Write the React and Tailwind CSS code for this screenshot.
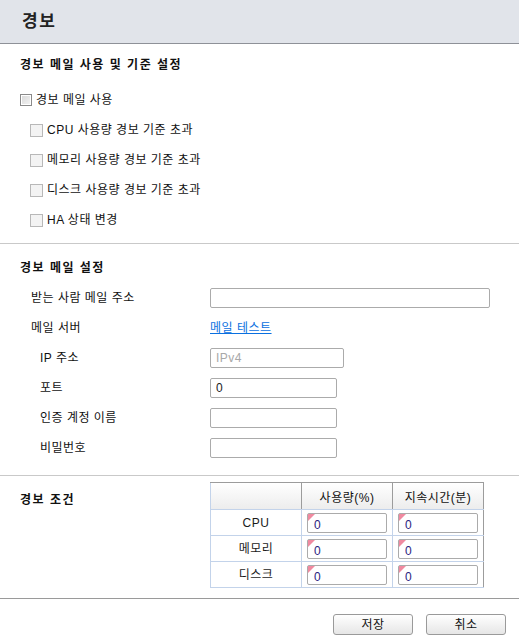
import { useState } from 'react';

const font = { fontFamily: '"Liberation Sans", "Noto Sans CJK KR", sans-serif' };

const alarmItems = ['CPU 사용량 경보 기준 초과', '메모리 사용량 경보 기준 초과', '디스크 사용량 경보 기준 초과', 'HA 상태 변경'];

const mailRows = [
  { label: '받는 사람 메일 주소', indent: false, input: 'w-[280px]' },
  { label: '메일 서버', indent: false, link: '메일 테스트' },
  { label: 'IP 주소', indent: true, input: 'w-[134px]', placeholder: 'IPv4' },
  { label: '포트', indent: true, input: 'w-[127px]', value: '0' },
  { label: '인증 계정 이름', indent: true, input: 'w-[127px]' },
  { label: '비밀번호', indent: true, input: 'w-[127px]', type: 'password' }
];

const conditionRows = ['CPU', '메모리', '디스크'];

function Checkbox({ main, checked, onChange }) {
  return (
    <button
      type="button"
      onClick={onChange}
      className={
        main
          ? 'h-[12px] w-[12px] border border-[#8a8a8a] bg-gradient-to-br from-[#d8d8d8] to-[#f4f4f4] p-0 shadow-[inset_0_0_0_1px_#ffffff]'
          : 'h-[13px] w-[13px] border border-[#b8b8b8] bg-[#f3f3f3] p-0'
      }
    >
      {checked ? <span className="block text-[9px] leading-[10px] text-[#333]">✓</span> : null}
    </button>
  );
}

function CellInput() {
  return (
    <div className="relative h-[20px] w-[80px] rounded-[2px] border border-[#ababab] bg-white">
      <span className="absolute left-0 top-0 h-0 w-0 border-l-[7px] border-b-[7px] border-l-[#f08aa0] border-b-transparent" />
      <input
        defaultValue="0"
        className="h-full w-full bg-transparent pl-[6px] pt-[4px] text-[12px] text-[#2b2380] outline-none"
      />
    </div>
  );
}

function App() {
  const [checks, setChecks] = useState([false, false, false, false, false]);

  function toggle(index) {
    setChecks((current) => current.map((value, i) => (i === index ? !value : value)));
  }

  return (
    <div className="h-[644px] w-[519px] bg-white text-[12px] tracking-[0.5px] text-[#111]" style={font}>
      <div className="flex h-[44px] items-center border-b border-[#8e9198] bg-[#e1e4ea] pl-[22px]">
        <h1 className="text-[17px] font-bold tracking-[1.5px] text-[#222]">경보</h1>
      </div>

      <section className="border-b border-[#c9c9c9] pb-[8px] pt-[11px]">
        <h2 className="flex h-[20px] items-center pl-[20px] font-bold tracking-[1.5px]">경보 메일 사용 및 기준 설정</h2>
        <div className="mt-[10px] flex h-[30px] items-center gap-[4px] pl-[20px]">
          <Checkbox main checked={checks[0]} onChange={() => toggle(0)} />
          <span>경보 메일 사용</span>
        </div>
        {alarmItems.map((item, index) => (
          <div key={item} className="flex h-[30px] items-center gap-[4px] pl-[30px]">
            <Checkbox checked={checks[index + 1]} onChange={() => toggle(index + 1)} />
            <span>{item}</span>
          </div>
        ))}
      </section>

      <section className="border-b border-[#c9c9c9] pb-[12px] pt-[14px]">
        <h2 className="flex h-[20px] items-center pl-[20px] font-bold tracking-[1.5px]">경보 메일 설정</h2>
        <div className="mt-[5px]">
          {mailRows.map((row) => (
            <div key={row.label} className="flex h-[30px] items-center">
              <span className={row.indent ? 'w-[210px] pl-[40px]' : 'w-[210px] pl-[31px]'}>{row.label}</span>
              {row.link ? (
                <a href="#" className="text-[#0a70e0] underline">
                  {row.link}
                </a>
              ) : (
                <input
                  type={row.type || 'text'}
                  defaultValue={row.value}
                  placeholder={row.placeholder}
                  className={`${row.input} h-[20px] rounded-[2px] border border-[#ababab] px-[5px] text-[12px] text-[#222] outline-none placeholder:text-[#a8a8a8]`}
                />
              )}
            </div>
          ))}
        </div>
      </section>

      <section className="flex border-b border-[#9a9a9a] pb-[10px] pt-[6px]">
        <h2 className="mt-[7px] flex h-[20px] w-[210px] items-start pl-[20px] pt-[2px] font-bold tracking-[1.5px]">경보 조건</h2>
        <table className="w-[274px] table-fixed border-collapse">
          <thead>
            <tr className="h-[27px] bg-gradient-to-b from-white to-[#ececec]">
              <th className="w-[91px] border border-[#9c9c9c] border-b-[#c3d3ea] border-l-[#c3d3ea]" />
              <th className="w-[91px] border border-[#9c9c9c] border-b-[#c3d3ea] pt-[3px] font-normal">사용량(%)</th>
              <th className="w-[91px] border border-[#9c9c9c] border-b-[#c3d3ea] pt-[3px] font-normal">지속시간(분)</th>
            </tr>
          </thead>
          <tbody>
            {conditionRows.map((name) => (
              <tr key={name} className="h-[26px]">
                <td className="border border-[#c3d3ea] text-center text-[#1a1a1a]">{name}</td>
                <td className="border border-[#c3d3ea] pl-[5px]">
                  <CellInput />
                </td>
                <td className="border border-[#c3d3ea] border-r-[#9c9c9c] pl-[5px]">
                  <CellInput />
                </td>
              </tr>
            ))}
          </tbody>
        </table>
      </section>

      <div className="flex justify-end gap-[13px] pr-[13px] pt-[15px]">
        <button
          type="button"
          className="h-[21px] w-[80px] rounded-[3px] border border-[#9a9a9a] bg-gradient-to-b from-white to-[#e6e6e6] text-[12px]"
        >
          저장
        </button>
        <button
          type="button"
          className="h-[21px] w-[80px] rounded-[3px] border border-[#9a9a9a] bg-gradient-to-b from-white to-[#e6e6e6] text-[12px]"
        >
          취소
        </button>
      </div>
    </div>
  );
}

export default App;
